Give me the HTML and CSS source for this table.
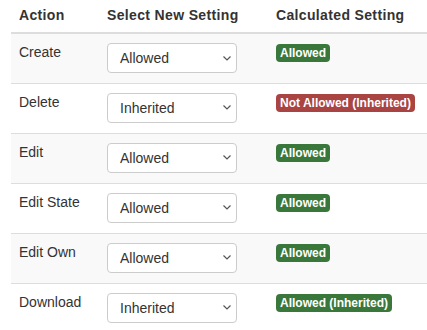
FILE: index.html
```
<!DOCTYPE html>
<html lang="en">

<head>
    <meta charset="utf-8">
    <meta name="viewport" content="width=device-width, initial-scale=1.0">
    <title>Permissions</title>
    <link rel="stylesheet" href="styles.css">
</head>

<body>
    <table class="perm-table">
        <thead>
            <tr>
                <th class="col-action">Action</th>
                <th class="col-select">Select New Setting</th>
                <th>Calculated Setting</th>
            </tr>
        </thead>
        <tbody>
            <tr>
                <td>Create</td>
                <td>
                    <select class="perm-select">
                        <option selected>Allowed</option>
                        <option>Not Allowed</option>
                        <option>Inherited</option>
                    </select>
                </td>
                <td><span class="badge badge-ok">Allowed</span></td>
            </tr>
            <tr>
                <td>Delete</td>
                <td>
                    <select class="perm-select">
                        <option>Allowed</option>
                        <option>Not Allowed</option>
                        <option selected>Inherited</option>
                    </select>
                </td>
                <td><span class="badge badge-no">Not Allowed (Inherited)</span></td>
            </tr>
            <tr>
                <td>Edit</td>
                <td>
                    <select class="perm-select">
                        <option selected>Allowed</option>
                        <option>Not Allowed</option>
                        <option>Inherited</option>
                    </select>
                </td>
                <td><span class="badge badge-ok">Allowed</span></td>
            </tr>
            <tr>
                <td>Edit State</td>
                <td>
                    <select class="perm-select">
                        <option selected>Allowed</option>
                        <option>Not Allowed</option>
                        <option>Inherited</option>
                    </select>
                </td>
                <td><span class="badge badge-ok">Allowed</span></td>
            </tr>
            <tr>
                <td>Edit Own</td>
                <td>
                    <select class="perm-select">
                        <option selected>Allowed</option>
                        <option>Not Allowed</option>
                        <option>Inherited</option>
                    </select>
                </td>
                <td><span class="badge badge-ok">Allowed</span></td>
            </tr>
            <tr>
                <td>Download</td>
                <td>
                    <select class="perm-select">
                        <option>Allowed</option>
                        <option>Not Allowed</option>
                        <option selected>Inherited</option>
                    </select>
                </td>
                <td><span class="badge badge-ok">Allowed (Inherited)</span></td>
            </tr>
        </tbody>
    </table>
</body>

</html>
```

FILE: styles.css
```
* {
    box-sizing: border-box;
}

body {
    margin: 0;
    padding: 0 0 0 11px;
    background-color: #ffffff;
    font-family: 'Liberation Sans', Arial, sans-serif;
    font-size: 14px;
    line-height: 20px;
    color: #333333;
    overflow: hidden;
}

.perm-table {
    width: 416px;
    border-collapse: collapse;
    border-spacing: 0;
}

.perm-table th {
    text-align: left;
    font-weight: bold;
    letter-spacing: 0.35px;
    padding: 5px 8px 7px;
    border-bottom: 2px solid #dddddd;
}

.col-action {
    width: 88px;
}

.col-select {
    width: 169px;
}

.perm-table td {
    height: 50px;
    padding: 8px;
    vertical-align: top;
    border-top: 1px solid #dddddd;
}

.perm-table tbody tr:first-child td {
    border-top: none;
}

.perm-table tbody tr:nth-child(odd) {
    background-color: #f9f9f9;
}

.perm-select {
    display: block;
    width: 130px;
    height: 30px;
    margin-top: 1px;
    padding: 0 28px 0 12px;
    font-family: 'Liberation Sans', Arial, sans-serif;
    font-size: 14px;
    color: #333333;
    background-color: #ffffff;
    border: 1px solid #cccccc;
    border-radius: 4px;
    appearance: none;
    -webkit-appearance: none;
    background-image: url("data:image/svg+xml,%3csvg xmlns='http://www.w3.org/2000/svg' viewBox='0 0 8 5'%3e%3cpath fill='none' stroke='%23555' stroke-width='1.2' d='M0.5 0.5l3.5 3.5 3.5-3.5'/%3e%3c/svg%3e");
    background-repeat: no-repeat;
    background-position: right 5px center;
    background-size: 8px 5px;
}

.badge {
    display: inline-block;
    margin-top: 2px;
    padding: 2px 4px;
    font-size: 12px;
    font-weight: bold;
    line-height: 14px;
    color: #ffffff;
    border-radius: 4px;
    white-space: nowrap;
    vertical-align: top;
}

.badge-ok {
    background-color: #3a773b;
}

.badge-no {
    background-color: #a94442;
}
```
